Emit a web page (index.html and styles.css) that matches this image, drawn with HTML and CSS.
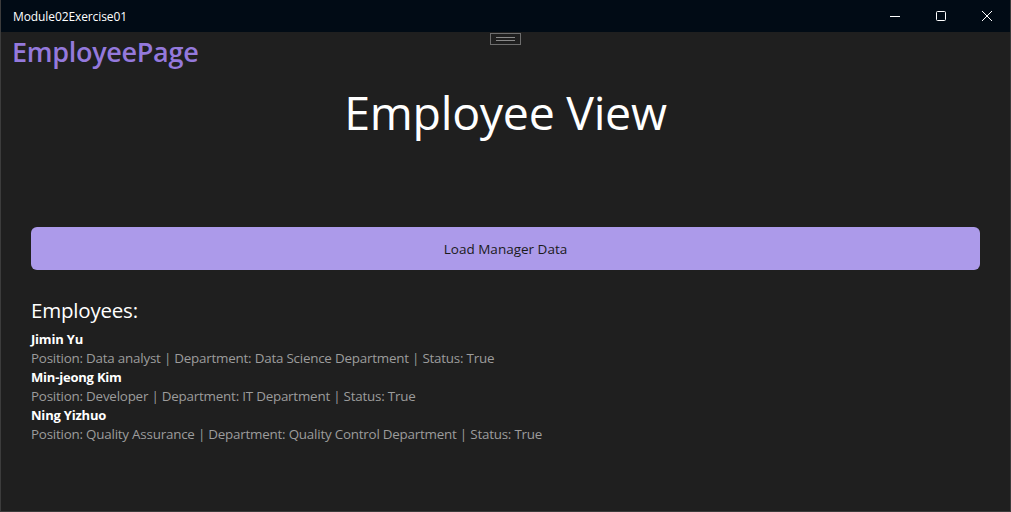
FILE: index.html
```html
<!DOCTYPE html>
<html>
<head>
<meta charset="utf-8">
<link rel="stylesheet" href="styles.css">
</head>
<body>
<div class="window">
  <div class="titlebar">
    <span class="app-title">Module02Exercise01</span>
    <div class="controls">
      <span class="ctl"><svg width="12" height="12" viewBox="0 0 12 12"><path d="M1 6.5H11" stroke="#fff" stroke-width="1"/></svg></span>
      <span class="ctl"><svg width="12" height="12" viewBox="0 0 12 12"><rect x="1.5" y="1.5" width="9" height="9" rx="1" fill="none" stroke="#fff" stroke-width="1"/></svg></span>
      <span class="ctl"><svg width="12" height="12" viewBox="0 0 12 12"><path d="M1 1L11 11M11 1L1 11" stroke="#fff" stroke-width="1"/></svg></span>
    </div>
  </div>
  <div class="content">
    <div class="handle"><span></span><span></span></div>
    <div class="page-title">EmployeePage</div>
    <h1 class="view-title">Employee View</h1>
    <div class="main">
      <button class="load-btn">Load Manager Data</button>
      <h2 class="section">Employees:</h2>
      <div class="list">
        <div class="emp">
          <div class="name">Jimin Yu</div>
          <div class="info">Position: Data analyst | Department: Data Science Department | Status: True</div>
        </div>
        <div class="emp">
          <div class="name">Min-jeong Kim</div>
          <div class="info">Position: Developer | Department: IT Department | Status: True</div>
        </div>
        <div class="emp">
          <div class="name">Ning Yizhuo</div>
          <div class="info">Position: Quality Assurance | Department: Quality Control Department | Status: True</div>
        </div>
      </div>
    </div>
  </div>
</div>
</body>
</html>
```
FILE: styles.css
```css
* { box-sizing: border-box; }
html, body { margin: 0; padding: 0; background: #1f1f1f; }
body { font-family: "Open Sans", "Noto Sans", sans-serif; color: #fff; }
.window {
  width: 1011px; height: 512px;
  display: flex; flex-direction: column;
  border: 1px solid #3c3c3c; border-top: none;
  background: #1f1f1f;
  overflow: hidden;
}
.titlebar {
  height: 32px; background: #010b15;
  display: flex; align-items: center; justify-content: space-between;
  padding-left: 12px; flex: none;
}
.app-title { font-size: 12px; color: #fff; letter-spacing: -0.1px; }
.controls { display: flex; height: 32px; }
.ctl { width: 46px; height: 32px; display: flex; align-items: center; justify-content: center; }
.content { position: relative; flex: 1; display: flex; flex-direction: column; }
.handle {
  position: absolute; left: 489px; top: 1px;
  width: 31px; height: 12px; border: 1px solid #6e6e6e;
  display: flex; flex-direction: column; align-items: center; justify-content: center; gap: 2px;
}
.handle span { display: block; width: 19px; height: 1px; background: #8a8a8a; }
.page-title {
  font-size: 27px; font-weight: 600; color: #9479dc;
  padding-left: 11px; margin-top: 2px; line-height: 36px; letter-spacing: -0.3px;
}
.view-title {
  margin: 12px 0 0; text-align: center; font-weight: 400;
  font-size: 46.5px; line-height: 60px; letter-spacing: -0.3px;
}
.main { padding: 0 30px 0 30px; margin-top: 85px; display: flex; flex-direction: column; }
.load-btn {
  height: 43px; border: none; border-radius: 6px; background: #ac9aea;
  font-family: inherit; font-size: 13.5px; color: #1b1b1b; width: 949px;
}
.section { margin: 26px 0 0; font-weight: 400; font-size: 20.5px; line-height: 28px; letter-spacing: -0.2px; }
.list { margin-top: 6px; display: flex; flex-direction: column; }
.name { font-weight: 700; font-size: 13px; line-height: 19px; letter-spacing: -0.2px; }
.info { font-size: 13.4px; line-height: 19px; color: #9c9c9c; letter-spacing: -0.22px; }
```
